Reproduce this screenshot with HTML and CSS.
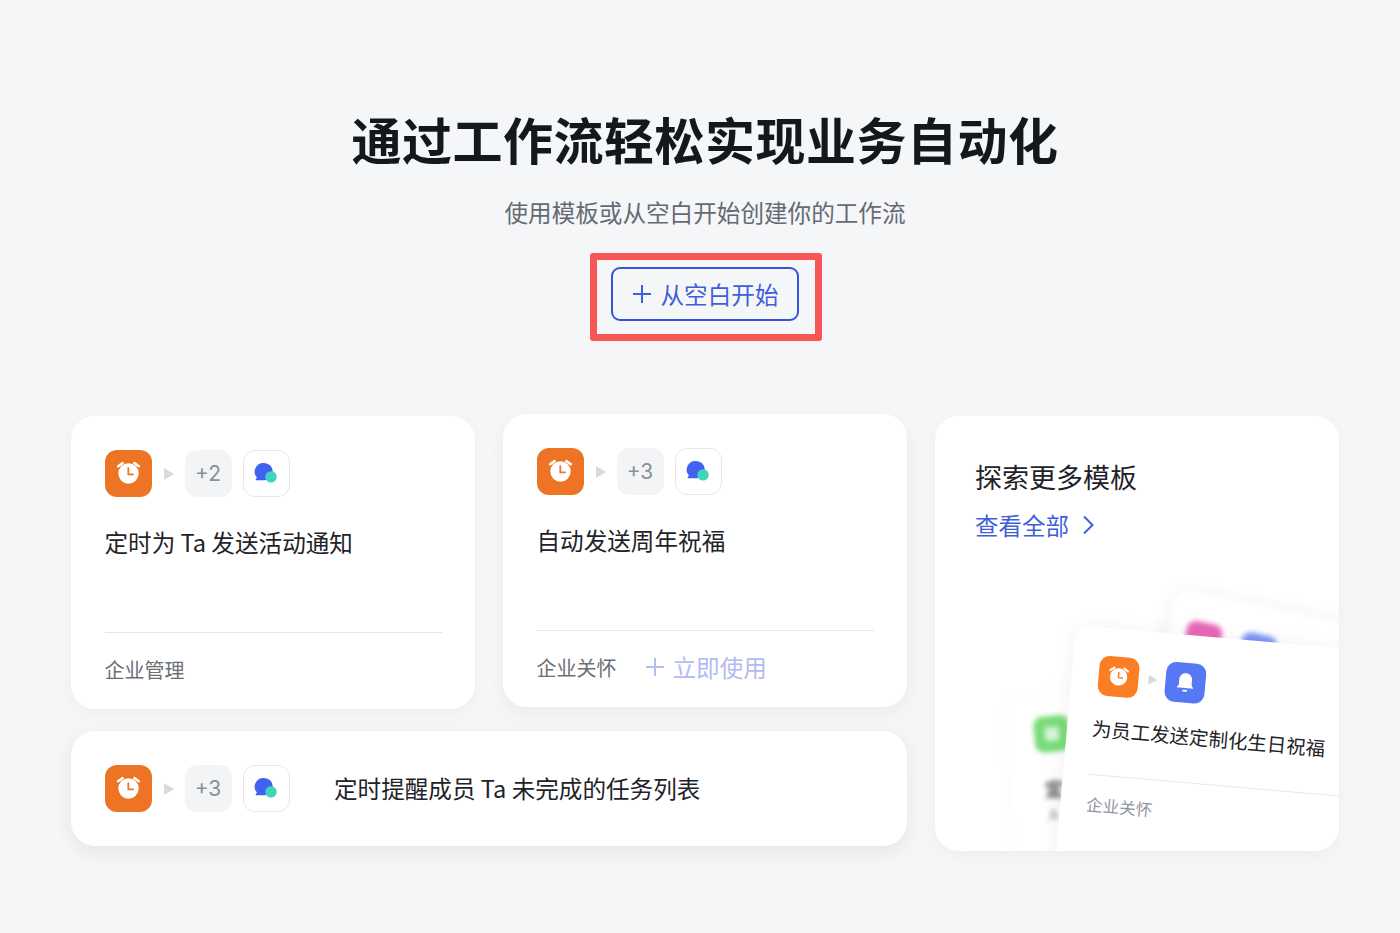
FILE: index.html
```html
<!DOCTYPE html>
<html lang="zh-CN">
<head>
<meta charset="utf-8">
<title>工作流</title>
<link rel="stylesheet" href="styles.css">
</head>
<body>
<svg class="defs" width="0" height="0" aria-hidden="true">
  <defs>
    <symbol id="alarm" viewBox="0 0 48 48">
      <path d="M13.400 16.600 18 13.400M34.600 16.600 30 13.400" fill="none" stroke="#fff" stroke-width="2.600" stroke-linecap="round"/>
      <circle cx="24" cy="24" r="10.400" fill="#fff"/>
      <path d="M23.800 18.600v6.400h4.800" fill="none" stroke="currentColor" stroke-width="1.800" stroke-linecap="round" stroke-linejoin="round"/>
    </symbol>
    <symbol id="chat" viewBox="0 0 48 48">
      <path d="M21.500 12.800a9.300 9.300 0 0 1 9.300 9.300c0 5.100-4.200 9-9.300 9h-8.600c-.5 0-.7-.6-.4-1l1.300-1.800a9.300 9.300 0 0 1 7.700-15.500z" fill="#3f62f0"/>
      <circle cx="28.800" cy="27.600" r="6.100" fill="#3ed6bb"/>
    </symbol>
    <symbol id="bell" viewBox="0 0 40 40">
      <path d="M20 10.500c-4 0-6.400 3-6.400 6.600v5.200l-2 3h16.800l-2-3v-5.200c0-3.600-2.400-6.600-6.400-6.600z" fill="#fff"/>
      <rect x="17.500" y="27.200" width="5" height="1.800" rx=".9" fill="#fff"/>
    </symbol>
  </defs>
</svg>

<main class="page">
  <header class="hero">
    <h1 class="hero-title">通过工作流轻松实现业务自动化</h1>
    <p class="hero-sub">使用模板或从空白开始创建你的工作流</p>
    <div class="mark">
      <button class="start-btn" type="button">
        <svg class="plus" viewBox="0 0 20 20"><path d="M10 1v18M1 10h18"/></svg>
        从空白开始
      </button>
    </div>
  </header>

  <section class="board">
    <div class="left">
      <div class="row">
        <article class="card">
          <div class="flow">
            <span class="tile tile-orange"><svg class="tile-icon"><use href="#alarm"/></svg></span>
            <span class="arrow"></span>
            <span class="tile tile-more">+2</span>
            <span class="tile tile-line"><svg class="tile-icon"><use href="#chat"/></svg></span>
          </div>
          <h3 class="card-title">定时为 Ta 发送活动通知</h3>
          <footer class="card-foot"><span class="cat">企业管理</span></footer>
        </article>
        <article class="card card-hover">
          <div class="flow">
            <span class="tile tile-orange"><svg class="tile-icon"><use href="#alarm"/></svg></span>
            <span class="arrow"></span>
            <span class="tile tile-more">+3</span>
            <span class="tile tile-line"><svg class="tile-icon"><use href="#chat"/></svg></span>
          </div>
          <h3 class="card-title">自动发送周年祝福</h3>
          <footer class="card-foot">
            <span class="cat">企业关怀</span>
            <span class="use">
              <svg class="plus" viewBox="0 0 20 20"><path d="M10 1v18M1 10h18"/></svg>
              立即使用
            </span>
          </footer>
        </article>
      </div>
      <article class="card card-wide">
        <div class="flow">
          <span class="tile tile-orange"><svg class="tile-icon"><use href="#alarm"/></svg></span>
          <span class="arrow"></span>
          <span class="tile tile-more">+3</span>
          <span class="tile tile-line"><svg class="tile-icon"><use href="#chat"/></svg></span>
        </div>
        <h3 class="card-title wide-title">定时提醒成员 Ta 未完成的任务列表</h3>
      </article>
    </div>

    <aside class="explore">
      <h3 class="explore-title">探索更多模板</h3>
      <a class="explore-link">查看全部
        <svg class="chev" viewBox="0 0 12 20"><path d="M2 1.500 10.500 10 2 18.500"/></svg>
      </a>
      <div class="deck deck-pink">
        <span class="mini mini-pink"></span><span class="mini mini-blue"></span>
      </div>
      <div class="deck deck-green">
        <span class="mini mini-green"><span class="mini-in"></span></span>
        <p class="deck-text">定</p>
        <p class="deck-small">A</p>
      </div>
      <div class="deck-main">
        <div class="flow flow-small">
          <span class="tile-s tile-s-orange"><svg class="tile-icon"><use href="#alarm"/></svg></span>
          <span class="arrow arrow-s"></span>
          <span class="tile-s tile-s-blue"><svg class="tile-icon"><use href="#bell"/></svg></span>
        </div>
        <p class="deck-title">为员工发送定制化生日祝福</p>
        <p class="deck-cat">企业关怀</p>
      </div>
    </aside>
  </section>
</main>
</body>
</html>
```
FILE: styles.css
```css
* { box-sizing: border-box; }
html, body { margin: 0; height: 100%; }
body {
  background: #f5f6f8;
  color: #1f2329;
  font-family: "Noto Sans CJK SC", "Inter", sans-serif;
  overflow: hidden;
}
.defs { display: block; height: 0; }
.page { padding: 102px 61px 0 71px; }

.hero { display: flex; flex-direction: column; align-items: center; }
.hero-title {
  margin: 0;
  font-size: 50px;
  line-height: 72px;
  font-weight: 700;
  color: #14171c;
  letter-spacing: .5px;
}
.hero-sub {
  margin: 20px 0 0;
  font-size: 23.6px;
  line-height: 36px;
  color: #646a73;
}
.mark {
  margin: 23px 0 0 2px;
  padding: 7px 16px 13px 14px;
  border: 7px solid #f85656;
  border-radius: 3px;
}
.start-btn {
  display: flex;
  align-items: center;
  justify-content: center;
  gap: 9px;
  width: 188px;
  height: 54px;
  padding: 0;
  background: transparent;
  border: 2px solid #3356d8;
  border-radius: 9px;
  color: #3f5fd9;
  font: 400 23.6px/32px "Noto Sans CJK SC", sans-serif;
}
.plus { width: 20px; height: 20px; flex: none; }
.plus path { fill: none; stroke: currentColor; stroke-width: 2; }

.board { display: flex; gap: 28px; margin-top: 75px; }
.left { width: 836px; display: flex; flex-direction: column; gap: 22px; }
.row { display: flex; gap: 28px; }

.card {
  width: 404px;
  height: 293px;
  padding: 34px 33px 0 33.5px;
  background: #fff;
  border-radius: 24px;
  box-shadow: 0 4px 16px rgba(31, 35, 41, .035);
  display: flex;
  flex-direction: column;
}
.card-hover {
  margin-top: -2px;
  margin-bottom: 2px;
  box-shadow: 0 6px 18px rgba(31, 35, 41, .05);
}
.card-wide {
  width: 100%;
  height: 115px;
  padding: 0 33px 0 33.5px;
  flex-direction: row;
  align-items: center;
  box-shadow: 0 6px 18px rgba(31, 35, 41, .08);
}
.flow { display: flex; align-items: center; }
.tile {
  width: 47px;
  height: 47px;
  border-radius: 12px;
  display: flex;
  align-items: center;
  justify-content: center;
  flex: none;
}
.tile-icon { width: 100%; height: 100%; display: block; }
.tile-orange { background: #ed7424; color: #ed7424; }
.tile-more {
  background: #f3f4f6;
  color: #8a9099;
  font: 400 21px/1 "Inter", sans-serif;
  margin-right: 11px;
}
.tile-line { background: #fff; border: 1px solid #e5e7eb; }
.arrow {
  width: 0;
  height: 0;
  margin: 0 11px 0 12px;
  border-left: 10px solid #d8dade;
  border-top: 6px solid transparent;
  border-bottom: 6px solid transparent;
}
.card-title {
  margin: 28px 0 0;
  font-size: 23.6px;
  line-height: 34px;
  font-weight: 400;
  color: #1f2329;
}
.wide-title { margin: 0 0 2px 44.5px; }
.card-foot {
  margin-top: auto;
  height: 77px;
  border-top: 1px solid #e4e6e9;
  display: flex;
  align-items: center;
  padding-bottom: 2px;
}
.cat { font-size: 20px; line-height: 28px; color: #6b7078; }
.use {
  display: flex;
  align-items: center;
  gap: 8px;
  margin-left: 28px;
  margin-bottom: 2px;
  color: #b3bbf0;
  font-size: 23.6px;
  line-height: 32px;
}

.explore {
  position: relative;
  width: 404px;
  height: 435px;
  padding: 42px 40px 0;
  background: #fff;
  border-radius: 24px;
  box-shadow: 0 4px 16px rgba(31, 35, 41, .035);
  overflow: hidden;
}
.explore-title {
  margin: 0;
  font-size: 27px;
  line-height: 38px;
  font-weight: 400;
  color: #1f2329;
}
.explore-link {
  display: flex;
  align-items: center;
  gap: 13px;
  margin-top: 12px;
  font-size: 23.5px;
  line-height: 34px;
  color: #3f5fd9;
}
.chev { width: 12px; height: 20px; }
.chev path { fill: none; stroke: currentColor; stroke-width: 2; }

.deck, .deck-main {
  position: absolute;
  background: #fff;
  border-radius: 16px;
  box-shadow: 0 2px 20px rgba(31, 35, 41, .07);
}
.deck { filter: blur(2.5px); }
.deck-pink {
  left: 242px;
  top: 172px;
  width: 300px;
  height: 120px;
  transform: rotate(12deg);
  transform-origin: 0 0;
  padding: 28px 18px;
  display: flex;
  gap: 20px;
}
.deck-green {
  left: 68px;
  top: 284px;
  width: 160px;
  height: 170px;
  transform: rotate(-5deg);
  transform-origin: 0 0;
  padding: 20px 28px;
  box-shadow: 0 0 14px rgba(31, 35, 41, .03);
}
.mini { display: block; width: 36px; height: 36px; border-radius: 9px; flex: none; }
.mini-pink { background: #e868b8; }
.mini-blue { background: #7d96f5; }
.mini-green {
  background: #78dc78;
  display: flex;
  align-items: center;
  justify-content: center;
}
.mini-in { width: 14px; height: 14px; background: #d7f3d7; border-radius: 2px; }
.deck-text { margin: 24px 0 0 6px; font-size: 19px; line-height: 26px; color: #555; font-weight: 700; }
.deck-small { margin: 2px 0 0 8px; font-size: 15px; line-height: 20px; color: #888; }

.deck-main {
  left: 141px;
  top: 209px;
  width: 340px;
  height: 270px;
  padding: 28px 27px;
  transform: rotate(5deg);
  transform-origin: 0 0;
  box-shadow: 0 2px 22px rgba(31, 35, 41, .06);
}
.tile-s { width: 40px; height: 40px; border-radius: 10px; flex: none; }
.tile-s-orange { background: #fb7d24; color: #fb7d24; }
.tile-s-blue { background: #5678f5; }
.arrow-s {
  margin: 0 8px 0 10px;
  border-left-width: 9px;
  border-top-width: 5.5px;
  border-bottom-width: 5.5px;
}
.deck-title {
  margin: 19px 0 0 -2px;
  width: 300px;
  font-size: 19.5px;
  line-height: 28px;
  color: #1f2329;
  white-space: nowrap;
}
.deck-cat {
  margin: 32px 0 0 -1px;
  padding-top: 17px;
  font-size: 16.5px;
  line-height: 24px;
  color: #8f959e;
  border-top: 1px solid #e6e8eb;
}
```
